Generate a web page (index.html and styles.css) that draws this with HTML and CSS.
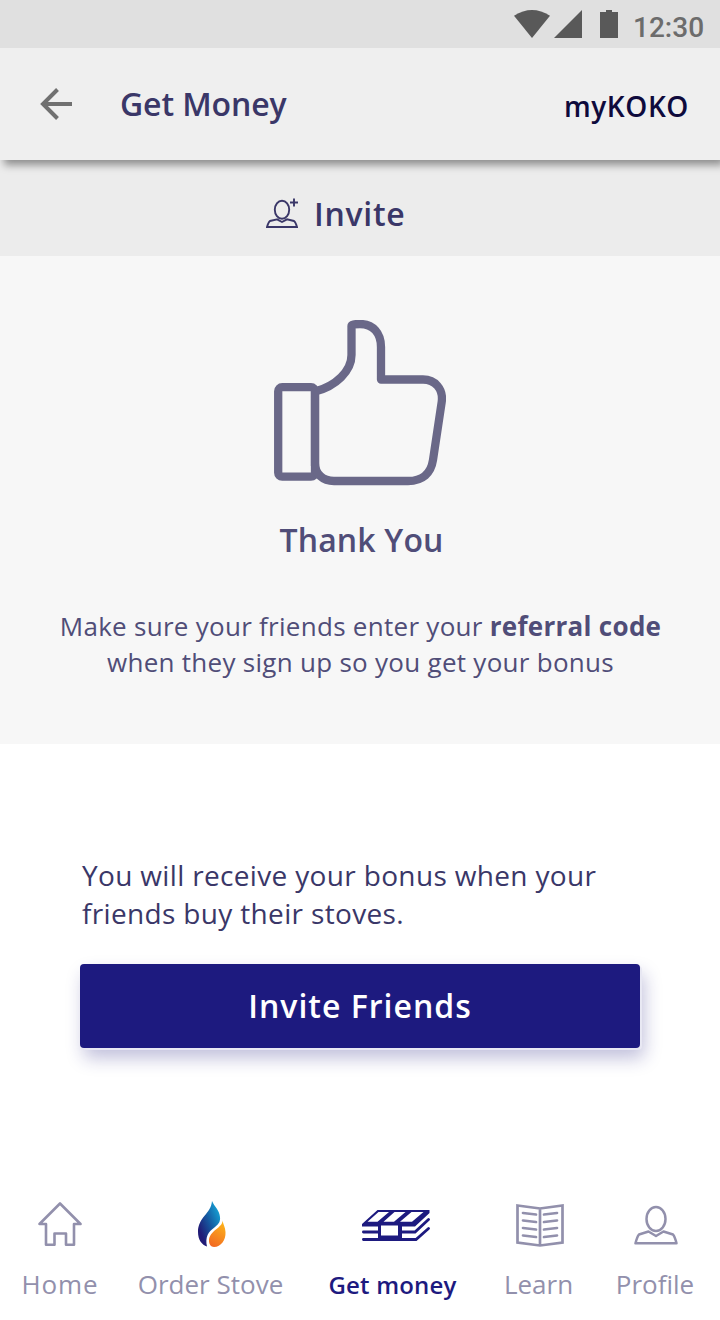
FILE: index.html
```html
<!DOCTYPE html>
<html lang="en">
<head>
<meta charset="utf-8">
<title>Get Money</title>
<link rel="stylesheet" href="styles.css">
</head>
<body>
<div class="screen">
  <div class="status">
    <svg class="status-icons" width="110" height="30" viewBox="0 0 110 30" fill="#595959">
      <path d="M0 5.7Q18-5.7 36 5.7L18 28z"/>
      <path d="M40 28L68 0V28z"/>
      <path d="M86 2h6V0h6v2h6v26H86z"/>
    </svg>
    <span class="clock">12:30</span>
  </div>
  <header class="appbar">
    <svg class="back" width="32" height="32" viewBox="0 0 32 32" fill="none" stroke="#707070" stroke-width="4"><path d="M32 16H3M17.5 1.5L3 16l14.500 14.500"/></svg>
    <h1 class="title">Get Money</h1>
    <span class="brand">myKOKO</span>
  </header>
  <div class="tab">
    <svg width="32" height="31" viewBox="0 0 32 31" fill="none" stroke="#3a3768" stroke-width="1.900">
      <ellipse cx="16" cy="11.800" rx="7.200" ry="9"/>
      <path d="M11 21.300L4 23Q2.500 24 1 29H31Q29.500 24 28 23L21 21.300L16 24z"/>
      <path d="M24 4.500h8M28 .5v8"/>
    </svg>
    <span class="tab-label">Invite</span>
  </div>
  <section class="thanks">
    <svg class="thumb" width="172" height="166" viewBox="0 0 172 166" fill="none" stroke="#6a6888" stroke-width="8.300">
      <rect x="4.200" y="67.200" width="36.800" height="89.500" rx="4"/>
      <path d="M41 146V71.500C62 66 77.500 51 77.500 35V6C77.500 4.500 80 4 86 4C99 4 107 13 107 27V59.500H149C161 59.500 169.500 69 167.700 82L159 140C157 153 149 161 134 161H60C49 161 41 154 41 143" stroke-linejoin="round"/>
    </svg>
    <h2 class="thanks-title">Thank You</h2>
    <p class="thanks-text"><span class="line-a">Make sure your friends enter your <b>referral code</b></span><span class="line-b">when they sign up so you get your bonus</span></p>
  </section>
  <section class="bonus">
    <p class="bonus-text">You will receive your bonus when your<br>friends buy their stoves.</p>
    <button class="cta">Invite Friends</button>
  </section>
  <nav class="nav">
    <a class="item home">
      <svg width="44" height="48" viewBox="0 0 44 48" fill="none" stroke="#9290ac" stroke-width="2.600" stroke-linejoin="round"><path d="M22 3.500L42.500 24H36V44.700H28V33.500H16.500V44.700H8V24H1.500z"/></svg>
      <span>Home</span>
    </a>
    <a class="item order">
      <svg width="28" height="48" viewBox="0 0 28 48">
        <defs>
          <linearGradient id="blue" x1=".2" y1=".8" x2=".9" y2=".2"><stop offset="0" stop-color="#211b76"/><stop offset=".5" stop-color="#1559a0"/><stop offset="1" stop-color="#159bd0"/></linearGradient>
          <linearGradient id="orange" x1=".3" y1="1" x2=".7" y2="0"><stop offset="0" stop-color="#f26a22"/><stop offset="1" stop-color="#fdb41a"/></linearGradient>
        </defs>
        <path fill="url(#blue)" d="M14 1C13 14 0 17 0 32C0 40 4 45 9 46.500C7 37 10 32 17 27C21 24 22.500 21 22 17C21.500 10 16 6 14 1z"/>
        <path fill="url(#orange)" d="M24.500 20.500C25 28 11 30 11 41C11 44 13 47 16 47C23 47 28 40 27.500 32C27.300 27 25 24 24.500 20.500z"/>
      </svg>
      <span>Order Stove</span>
    </a>
    <a class="item money">
      <svg width="68" height="48" viewBox="0 0 68 48" fill="none" stroke="#1d1a7f" stroke-width="2.800">
        <path fill="#1d1a7f" stroke="none" d="M15.500 10H67.500V13L53 26.500H40V41H16V26.500H0V24z"/>
        <path fill="#fff" stroke="none" d="M16.500 12H27L15.500 21.800H5.500zM32.500 12H43.500L32 21.800H21.500zM49.500 12H61.500L50 21.800H38zM19 25.500H36V35.500H19z"/>
        <path stroke-linecap="round" d="M1.400 32H17M1.400 39.500H54L66.500 28.500M38 32H53L66.500 19.500"/>
      </svg>
      <span>Get money</span>
    </a>
    <a class="item learn">
      <svg width="48" height="48" viewBox="0 0 48 48" fill="none" stroke="#9290ac" stroke-width="2.700">
        <path d="M1.500 5.500L24 8.500L46.500 5.500V42.500L24 45.500L1.500 42.500zM24 8.500V45"/>
        <path stroke-linecap="round" d="M7 13l13 1.500M7 20.500L20 22M7 28l13 1.500M7 35.500L20 37M41 13l-13 1.500M41 20.500L28 22M41 28l-13 1.500M41 35.500L28 37"/>
      </svg>
      <span>Learn</span>
    </a>
    <a class="item profile">
      <svg width="44" height="48" viewBox="0 0 44 48" fill="none" stroke="#9290ac" stroke-width="2.500">
        <ellipse cx="22" cy="19" rx="9.500" ry="12"/>
        <path stroke-linejoin="round" d="M14.500 31.500L5 34.500Q3 37 1.500 43.300H42.500Q41 37 39 34.500L29.500 31.500L22 36z"/>
      </svg>
      <span>Profile</span>
    </a>
  </nav>
</div>
</body>
</html>
```

FILE: styles.css
```css
* { box-sizing: border-box; }
body { margin: 0; font-family: "Open Sans", "Noto Sans", sans-serif; background: #fff; color: #3a3768; }
h1, h2, p { margin: 0; }
.screen { width: 720px; height: 1320px; display: flex; flex-direction: column; white-space: nowrap; overflow: hidden; }
.status { position: relative; z-index: 2; height: 48px; background: #e0e0e0; display: flex; padding: 10px 0 0 514px; }
.clock { margin-left: 9px; font: 500 28px/36px Roboto, sans-serif; color: #6c6c6c; }
.appbar { position: relative; z-index: 1; height: 112px; flex: none; background: #efefef; display: flex; align-items: center; padding: 0 31px 0 40px; box-shadow: 4px 5px 8px rgba(0, 0, 0, .4); }
.title { margin-left: 48px; font-size: 32px; line-height: 44px; font-weight: 600; letter-spacing: -.1px; }
.brand { margin-left: auto; padding-top: 3px; font-size: 28px; line-height: 38px; font-weight: 600; letter-spacing: .6px; color: #0e0a3c; }
.tab { height: 96px; flex: none; background: #ececec; display: flex; padding: 38px 0 0 266px; }
.tab-label { margin: -6px 0 0 16px; font-size: 32px; line-height: 44px; font-weight: 600; letter-spacing: .7px; }
.thanks { height: 488px; flex: none; background: #f7f7f7; display: flex; flex-direction: column; align-items: center; padding-top: 64px; color: #504d78; }
.thanks-title { margin: 32px 0 0 3px; font-size: 32px; line-height: 44px; font-weight: 600; letter-spacing: .15px; }
.thanks-text { margin: 46px 0 0 1px; font-size: 26px; line-height: 36px; letter-spacing: .28px; text-align: center; }
.thanks-text span { display: block; }
.bonus { height: 440px; flex: none; padding: 112px 80px 0; }
.bonus-text { padding-left: 2px; font-size: 28px; line-height: 38px; letter-spacing: .34px; }
.cta { display: block; width: 560px; height: 84px; margin-top: 32px; padding: 0; border: 0; border-radius: 4px; background: #1d1a7f; color: #fff; font: 600 32px/84px "Open Sans", sans-serif; letter-spacing: 1px; box-shadow: 2px 2px 0 #e8e8f3, 4px 10px 18px rgba(29, 26, 127, .28); }
.nav { flex: 1; display: flex; padding: 16px 26px 0 22px; font-size: 26px; line-height: 34px; color: #9290ac; }
.item { display: flex; flex-direction: column; align-items: center; gap: 19px; flex: none; }
.home { width: 76px; letter-spacing: .9px; }
.order { width: 145px; margin-left: 40px; }
.order svg { margin-left: 3px; }
.money { width: 129px; margin-left: 45px; gap: 20px; color: #1d1a7f; font-weight: 600; font-size: 24px; letter-spacing: .2px; }
.money svg { margin-left: 7px; }
.learn { width: 69px; margin-left: 47px; }
.learn svg { margin-left: 3px; }
.profile { width: 78px; margin-left: 43px; }
.profile svg { margin-left: 2px; }
```
